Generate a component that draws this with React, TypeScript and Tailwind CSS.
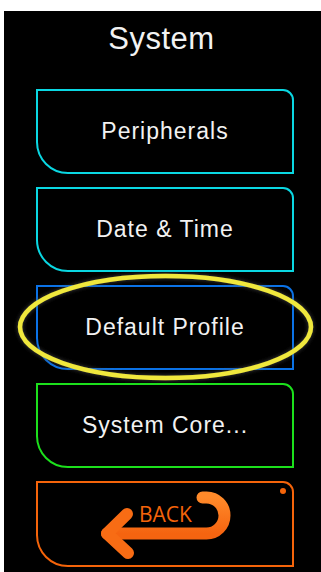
import React from "react";

const font = { fontFamily: '"Liberation Sans", Arial, sans-serif' };

function MenuButton({ label, color }: { label: string; color: string }) {
  return (
    <div
      className="h-[85px] w-[258px] flex items-center justify-center border-2 rounded-tr-[11px] rounded-bl-[32px] bg-black"
      style={{ borderColor: color }}
    >
      <span className="text-[23px] tracking-[1px] text-[#f2f2f2] leading-none">{label}</span>
    </div>
  );
}

export default function App() {
  return (
    <div className="w-[321px] h-[572px] bg-white pt-[11px] pl-[4px] overflow-hidden" style={font}>
      <div className="relative h-[561px] w-[317px] bg-black flex flex-col">
        <div className="h-[78px] flex items-start justify-center pt-[12px] pr-[2px]">
          <span className="text-[31px] tracking-[0.5px] text-[#f2f2f2] leading-none">System</span>
        </div>
        <div className="flex flex-col gap-[13px] ml-[32px]">
          <MenuButton label="Peripherals" color="#0ad7e2" />
          <MenuButton label="Date & Time" color="#0ad7e2" />
          <MenuButton label="Default Profile" color="#0b72e6" />
          <MenuButton label="System Core..." color="#1ce01c" />
          <div className="relative h-[86px] w-[258px] border-2 border-[#f5640a] rounded-tr-[11px] rounded-bl-[32px] bg-black">
            <svg className="absolute inset-0" width="254" height="82" viewBox="0 0 254 82">
              <defs>
                <linearGradient id="ag" x1="0" y1="0" x2="0" y2="1">
                  <stop offset="0" stopColor="#ff8a2a" />
                  <stop offset="1" stopColor="#f56410" />
                </linearGradient>
              </defs>
              <path
                d="M69 50.5 L168.5 50.5 A18 18 0 0 0 168.5 14.5 L164.5 14.5"
                fill="none"
                stroke="url(#ag)"
                strokeWidth="12"
                strokeLinecap="round"
                strokeLinejoin="round"
              />
              <path
                d="M89 31 L69 50.5 L90 70"
                fill="none"
                stroke="#f86c14"
                strokeWidth="12"
                strokeLinecap="round"
                strokeLinejoin="round"
              />
              <circle cx="245" cy="8" r="3" fill="#f5640a" />
            </svg>
            <span
              className="absolute left-[101px] top-[21px] text-[21px] leading-none text-[#f5640a]"
              style={{ fontFamily: '"Open Sans", "Liberation Sans", sans-serif' }}
            >
              BACK
            </span>
          </div>
        </div>
        <svg className="absolute left-[8px] top-[258px]" width="309" height="116" viewBox="0 0 309 116">
          <defs>
            <filter id="sh" x="-10%" y="-20%" width="120%" height="140%">
              <feDropShadow dx="0" dy="0" stdDeviation="2" floodColor="#555" floodOpacity="0.8" />
            </filter>
          </defs>
          <ellipse cx="153.5" cy="58" rx="145.5" ry="51" fill="none" stroke="#f0e83c" strokeWidth="4.5" filter="url(#sh)" />
        </svg>
      </div>
    </div>
  );
}
